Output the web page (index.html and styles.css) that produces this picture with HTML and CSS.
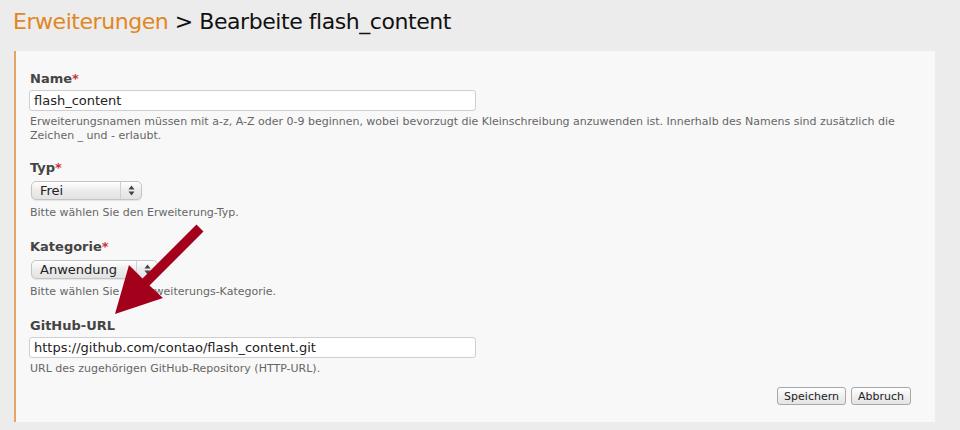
FILE: index.html
```html
<!DOCTYPE html>
<html lang="de">
<head>
<meta charset="utf-8">
<title>Erweiterungen</title>
<link rel="stylesheet" href="styles.css">
</head>
<body>
<h1 class="title"><span class="crumb">Erweiterungen</span> &gt; Bearbeite flash_content</h1>
<div class="panel">
  <div class="field">
    <label class="label">Name<span class="req">*</span></label>
    <input class="text" type="text" value="flash_content">
    <p class="help">Erweiterungsnamen müssen mit a-z, A-Z oder 0-9 beginnen, wobei bevorzugt die Kleinschreibung anzuwenden ist. Innerhalb des Namens sind zusätzlich die Zeichen _ und - erlaubt.</p>
  </div>
  <div class="field field-select">
    <label class="label">Typ<span class="req">*</span></label>
    <div class="select sel-typ"><span class="sel-val">Frei</span><span class="sel-btn"><svg width="7" height="11" viewBox="0 0 7 11"><path d="M3.5 0.5L6.5 4.5H0.5Z M3.5 10.5L6.5 6.5H0.5Z" fill="#444"/></svg></span></div>
    <p class="help">Bitte wählen Sie den Erweiterung-Typ.</p>
  </div>
  <div class="field field-select">
    <label class="label">Kategorie<span class="req">*</span></label>
    <div class="select sel-kat"><span class="sel-val">Anwendung</span><span class="sel-btn"><svg width="7" height="11" viewBox="0 0 7 11"><path d="M3.5 0.5L6.5 4.5H0.5Z M3.5 10.5L6.5 6.5H0.5Z" fill="#444"/></svg></span></div>
    <p class="help">Bitte wählen Sie die Erweiterungs-Kategorie.</p>
  </div>
  <div class="field field-last">
    <label class="label">GitHub-URL</label>
    <input class="text" type="text" value="https://github.com/contao/flash_content.git">
    <p class="help">URL des zugehörigen GitHub-Repository (HTTP-URL).</p>
  </div>
  <div class="actions">
    <button class="btn">Speichern</button>
    <button class="btn">Abbruch</button>
  </div>
</div>
<svg class="arrow" width="960" height="430" viewBox="0 0 960 430"><polygon points="196.5,224.5 203.5,231.5 149.5,285.5 163,298 115,314 129,265 142.5,278.5" fill="#a3001b"/></svg>
</body>
</html>
```
FILE: styles.css
```css
html, body { margin: 0; padding: 0; }
body {
  background: #ececec;
  width: 960px;
  height: 430px;
  overflow: hidden;
  position: relative;
  font-family: "DejaVu Sans", Verdana, sans-serif;
  color: #333;
}
.title {
  margin: 0;
  padding: 9px 13px 0;
  height: 42px;
  box-sizing: border-box;
  font-family: "DejaVu Sans", sans-serif;
  font-weight: normal;
  font-size: 22px;
  color: #111;
  letter-spacing: -0.45px;
}
.crumb { color: #e2861f; }
.panel {
  margin: 9px 25px 0 14px;
  border-left: 2px solid #e4a566;
  background: #f8f8f8;
  padding: 20px 24px 17px 13px;
  height: 371px;
  box-sizing: border-box;
  display: flex;
  flex-direction: column;
}
.field { display: flex; flex-direction: column; align-items: flex-start; margin-bottom: 17px; }
.field-select { margin-bottom: 19px; }
.field-last { margin-bottom: 0; }
.label {
  font-weight: bold;
  font-size: 13px;
  color: #444;
  line-height: 16px;
  margin: 0 0 3px 1px;
}
.req { color: #c33; }
.text {
  width: 447px;
  height: 21px;
  box-sizing: border-box;
  border: 1px solid #cfcfcf;
  border-radius: 3px;
  background: #fff;
  font-family: "DejaVu Sans", sans-serif;
  font-size: 13px;
  color: #222;
  padding: 0 4px;
  margin: 0;
  outline: none;
}
.help {
  margin: 4px 0 0 1px;
  font-size: 11px;
  line-height: 14px;
  color: #666;
}
.field-select .help { margin-top: 6px; }
.select {
  display: flex;
  align-items: stretch;
  height: 19px;
  box-sizing: border-box;
  border: 1px solid #c4c4c4;
  border-radius: 5px;
  background: linear-gradient(#ffffff, #ececec 50%, #e3e3e3);
  box-shadow: 0 1px 1px rgba(0,0,0,0.08);
  margin: 2px 0 0 2px;
  font-size: 13px;
  color: #222;
}
.sel-typ { width: 111px; }
.sel-kat { width: 127px; }
.sel-val { flex: 1; padding-left: 8px; line-height: 17px; }
.sel-btn {
  width: 20px;
  border-left: 1px solid #d0d0d0;
  display: flex;
  align-items: center;
  justify-content: center;
}
.actions {
  display: flex;
  justify-content: flex-end;
  gap: 5px;
  margin-top: 11px;
}
.btn {
  font-family: "DejaVu Sans", sans-serif;
  font-size: 11px;
  color: #222;
  height: 18px;
  padding: 0 6px;
  border: 1px solid #a8a8a8;
  border-radius: 3px;
  background: linear-gradient(#ffffff, #efefef 50%, #e4e4e4);
}
.arrow { position: absolute; left: 0; top: 0; pointer-events: none; }
```
